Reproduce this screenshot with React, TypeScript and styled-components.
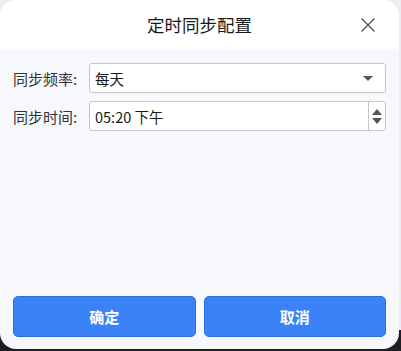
import styled, { createGlobalStyle } from 'styled-components';

const GlobalStyle = createGlobalStyle`
  html, body {
    margin: 0;
    padding: 0;
  }
  body {
    width: 401px;
    height: 351px;
    overflow: hidden;
    background: linear-gradient(to bottom, #eceef1 0, #eceef1 330px, #1d1e20 330px);
    font-family: "Noto Sans CJK SC", "Noto Sans", sans-serif;
  }
`;

function App() {
  return (
    <>
      <GlobalStyle />
      <Dialog>
        <Header>
          <Title>定时同步配置</Title>
          <CloseButton aria-label="关闭">
            <svg width="16" height="16" viewBox="0 0 16 16">
              <path d="M1.5 1.5 L14.5 14.5 M14.5 1.5 L1.5 14.5" stroke="#555" strokeWidth="1.4" fill="none" />
            </svg>
          </CloseButton>
        </Header>
        <Body>
          <FieldRow>
            <Label>同步频率:</Label>
            <Field>
              <FieldText>每天</FieldText>
              <svg width="12" height="7" viewBox="0 0 12 7">
                <path d="M1 1 L11 1 L6 6 Z" fill="#555" />
              </svg>
            </Field>
          </FieldRow>
          <FieldRow>
            <Label>同步时间:</Label>
            <Field $spin>
              <FieldText>05:20 下午</FieldText>
              <Spinner>
                <svg width="10" height="6" viewBox="0 0 10 6">
                  <path d="M0 6 L10 6 L5 0 Z" fill="#555" />
                </svg>
                <svg width="10" height="6" viewBox="0 0 10 6">
                  <path d="M0 0 L10 0 L5 6 Z" fill="#555" />
                </svg>
              </Spinner>
            </Field>
          </FieldRow>
        </Body>
        <Footer>
          <ActionButton>确定</ActionButton>
          <ActionButton>取消</ActionButton>
        </Footer>
      </Dialog>
    </>
  );
}

const Dialog = styled.div`
  width: 399px;
  height: 349px;
  border-radius: 16px;
  background: #f6f8fb;
  overflow: hidden;
  display: flex;
  flex-direction: column;
`;

const Header = styled.div`
  height: 49px;
  background: #ffffff;
  display: flex;
  align-items: center;
  justify-content: center;
  position: relative;
`;

const Title = styled.div`
  font-size: 17.5px;
  color: #1a1a1a;
  margin-top: -1px;
`;

const CloseButton = styled.button`
  position: absolute;
  right: 23px;
  top: 17px;
  width: 16px;
  height: 16px;
  padding: 0;
  border: none;
  background: none;
  display: flex;
`;

const Body = styled.div`
  flex: 1;
  padding: 14px 13px 0 13px;
  display: flex;
  flex-direction: column;
  gap: 8px;
`;

const FieldRow = styled.div`
  display: flex;
  align-items: center;
  gap: 4px;
`;

const Label = styled.div`
  width: 72px;
  font-size: 15px;
  color: #333;
  white-space: nowrap;
`;

const Field = styled.div<{ $spin?: boolean }>`
  flex: 1;
  height: 28px;
  border: 1px solid #c4c6ca;
  border-radius: 3px;
  background: #ffffff;
  display: flex;
  align-items: center;
  justify-content: space-between;
  padding-left: 5px;
  padding-right: ${(p) => (p.$spin ? '0' : '11px')};
`;

const FieldText = styled.div`
  font-size: 14.5px;
  color: #1a1a1a;
`;

const Spinner = styled.div`
  width: 16px;
  height: 100%;
  border-left: 1px solid #c4c6ca;
  display: flex;
  flex-direction: column;
  align-items: center;
  justify-content: center;
  gap: 3px;
`;

const Footer = styled.div`
  display: flex;
  gap: 8px;
  padding: 0 13px 12px 13px;
`;

const ActionButton = styled.button`
  flex: 1;
  height: 41px;
  border: 1px solid #2f6fd8;
  border-radius: 5px;
  background: #3b82f6;
  color: #ffffff;
  font-family: "Noto Sans CJK SC", "Noto Sans", sans-serif;
  font-size: 15px;
  font-weight: 700;
  padding: 0;
`;

export default App;
